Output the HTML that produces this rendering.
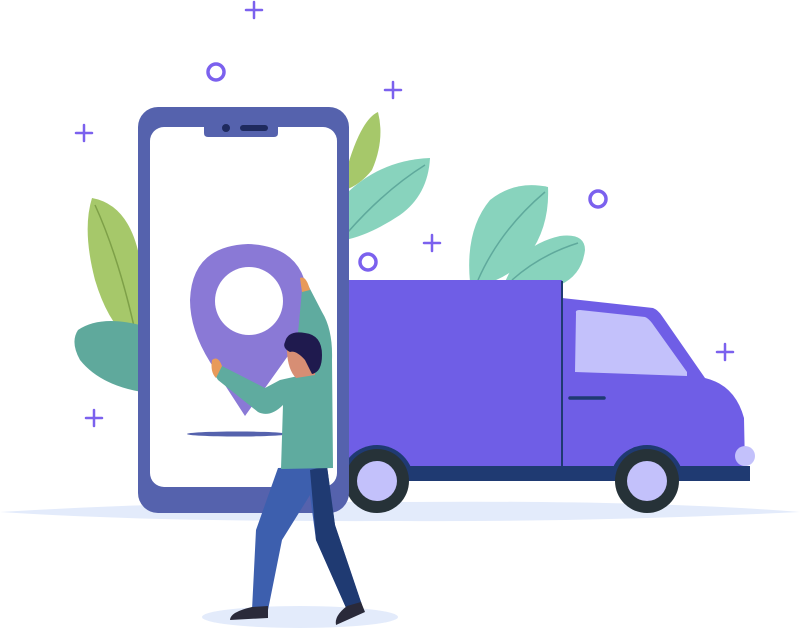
<!DOCTYPE html>
<html><head><meta charset="utf-8"><style>html,body{margin:0;padding:0;background:#fff;width:800px;height:631px;overflow:hidden}</style></head>
<body>
<svg width="800" height="631" viewBox="0 0 800 631" xmlns="http://www.w3.org/2000/svg">
<defs><clipPath id="above"><rect x="0" y="0" width="800" height="472"/></clipPath></defs>
<path d="M0 512 Q200 500 400 502 Q650 500 800 512 Q600 522 400 521 Q150 522 0 512Z" fill="#e3ebfb"/>
<ellipse cx="300" cy="617" rx="98" ry="11" fill="#e3ebfb"/>
<path d="M92 198 Q130 205 140 260 Q145 310 138 345 Q110 330 95 280 Q82 230 92 198Z" fill="#a6c86a"/>
<path d="M95 205 Q120 260 137 340" stroke="#7ea048" stroke-width="1.5" fill="none"/>
<path d="M78 330 Q100 315 140 325 L142 392 Q100 385 80 360 Q70 342 78 330Z" fill="#5fa99c"/>
<path d="M345 175 Q360 120 378 112 Q385 140 372 170 Q360 185 345 190Z" fill="#a6c86a"/>
<path d="M345 195 Q380 160 430 158 Q428 195 400 215 Q370 235 345 240Z" fill="#88d3bd"/>
<path d="M348 232 Q385 190 425 165" stroke="#5fa99c" stroke-width="1.5" fill="none"/>
<path d="M470 282 Q465 230 490 200 Q515 180 548 187 Q550 230 525 260 Q505 280 480 285Z" fill="#88d3bd"/>
<path d="M478 280 Q500 230 545 192" stroke="#5fa99c" stroke-width="1.5" fill="none"/>
<path d="M505 282 Q520 245 560 236 Q585 233 585 250 Q582 275 560 285Z" fill="#88d3bd"/>
<path d="M512 280 Q540 255 578 243" stroke="#5fa99c" stroke-width="1.5" fill="none"/>
<rect x="345" y="280" width="217" height="188" fill="#6f5ee6"/>
<path d="M562 298 L653 308 Q658 310 662 316 L705 378 Q735 385 744 418 L745 468 L562 468Z" fill="#6f5ee6"/>
<path d="M576 313 Q575 310 580 310 L645 317 Q648 318 652 323 L687 372 L687 376 L575 372Z" fill="#c3c1fb"/>
<line x1="562" y1="281" x2="562" y2="468" stroke="#1f3a72" stroke-width="2"/>
<line x1="570" y1="398" x2="604" y2="398" stroke="#1f3a72" stroke-width="3.5" stroke-linecap="round"/>
<circle cx="745" cy="456" r="10" fill="#c3c1fb"/>
<g clip-path="url(#above)">
<circle cx="377" cy="482" r="37" fill="#1f3a72"/>
<circle cx="647" cy="482" r="37" fill="#1f3a72"/>
</g>
<rect x="345" y="466" width="405" height="15" fill="#1f3a72"/>
<circle cx="377" cy="481" r="32" fill="#263238"/>
<circle cx="377" cy="481" r="20" fill="#c3c1fb"/>
<circle cx="647" cy="481" r="32" fill="#263238"/>
<circle cx="647" cy="481" r="20" fill="#c3c1fb"/>
<rect x="138" y="107" width="211" height="406" rx="20" fill="#5562ad"/>
<rect x="150" y="127" width="187" height="360" rx="14" fill="#fff"/>
<path d="M204 120 L278 120 L278 133 Q278 137 274 137 L208 137 Q204 137 204 133Z" fill="#5562ad"/>
<circle cx="226" cy="128" r="4" fill="#1f2a5e"/>
<rect x="240" y="125" width="28" height="6" rx="3" fill="#1f2a5e"/>
<ellipse cx="237" cy="434" rx="50" ry="2.5" fill="#5562ad"/>
<path d="M248 244 Q305 246 308 300 Q308 330 285 360 L245 416 L210 362 Q190 330 190 300 Q192 246 248 244Z" fill="#8a79d6"/>
<circle cx="249" cy="301" r="34" fill="#fff"/>
<path d="M278 468 L327 466 L335 525 L362 605 L347 610 L316 540 L310 495 L282 540 L268 610 L252 610 L256 530Z" fill="#3d5fae"/>
<path d="M310 470 L327 466 L335 525 L362 605 L347 610 L316 540 Z" fill="#1f3a72"/>
<path d="M252 607 L268 606 L268 618 L230 620 Q230 612 252 607Z" fill="#2a2a3a"/>
<path d="M347 606 L361 602 L365 612 L336 625 Q334 616 347 606Z" fill="#2a2a3a"/>
<path d="M213 372 L222 366 L265 388 L280 380 L298 376 L296 355 L302 290 L308 285 L322 312 Q333 330 332 360 L333 468 L281 469 L283 405 Q270 418 258 412 L218 380Z" fill="#5fab9f"/>
<path d="M212 360 Q218 355 222 366 L216 378 Q210 372 212 360Z" fill="#e89a5a"/>
<path d="M300 278 Q306 275 310 290 L302 292Z" fill="#e89a5a"/>
<path d="M287 352 Q285 335 300 336 L315 344 L315 375 L296 378 Q288 370 287 352Z" fill="#d78e74"/>
<path d="M285 342 Q288 330 305 333 Q322 335 322 355 Q322 372 312 374 L305 360 Q296 350 290 352 Q282 348 285 342Z" fill="#1f1a4e"/>
<g stroke="#7b61ee" stroke-width="2.5" fill="none" stroke-linecap="round">
<path d="M254 2 V18 M246 10 H262"/>
<path d="M84 125 V141 M76 133 H92"/>
<path d="M393 82 V98 M385 90 H401"/>
<path d="M432 235 V251 M424 243 H440"/>
<path d="M725 344 V360 M717 352 H733"/>
<path d="M94 410 V426 M86 418 H102"/>
<circle cx="216" cy="72" r="8" stroke-width="3.5"/>
<circle cx="598" cy="199" r="8" stroke-width="3.5"/>
<circle cx="368" cy="262" r="8" stroke-width="3.5"/>
</g>
</svg>
</body></html>
